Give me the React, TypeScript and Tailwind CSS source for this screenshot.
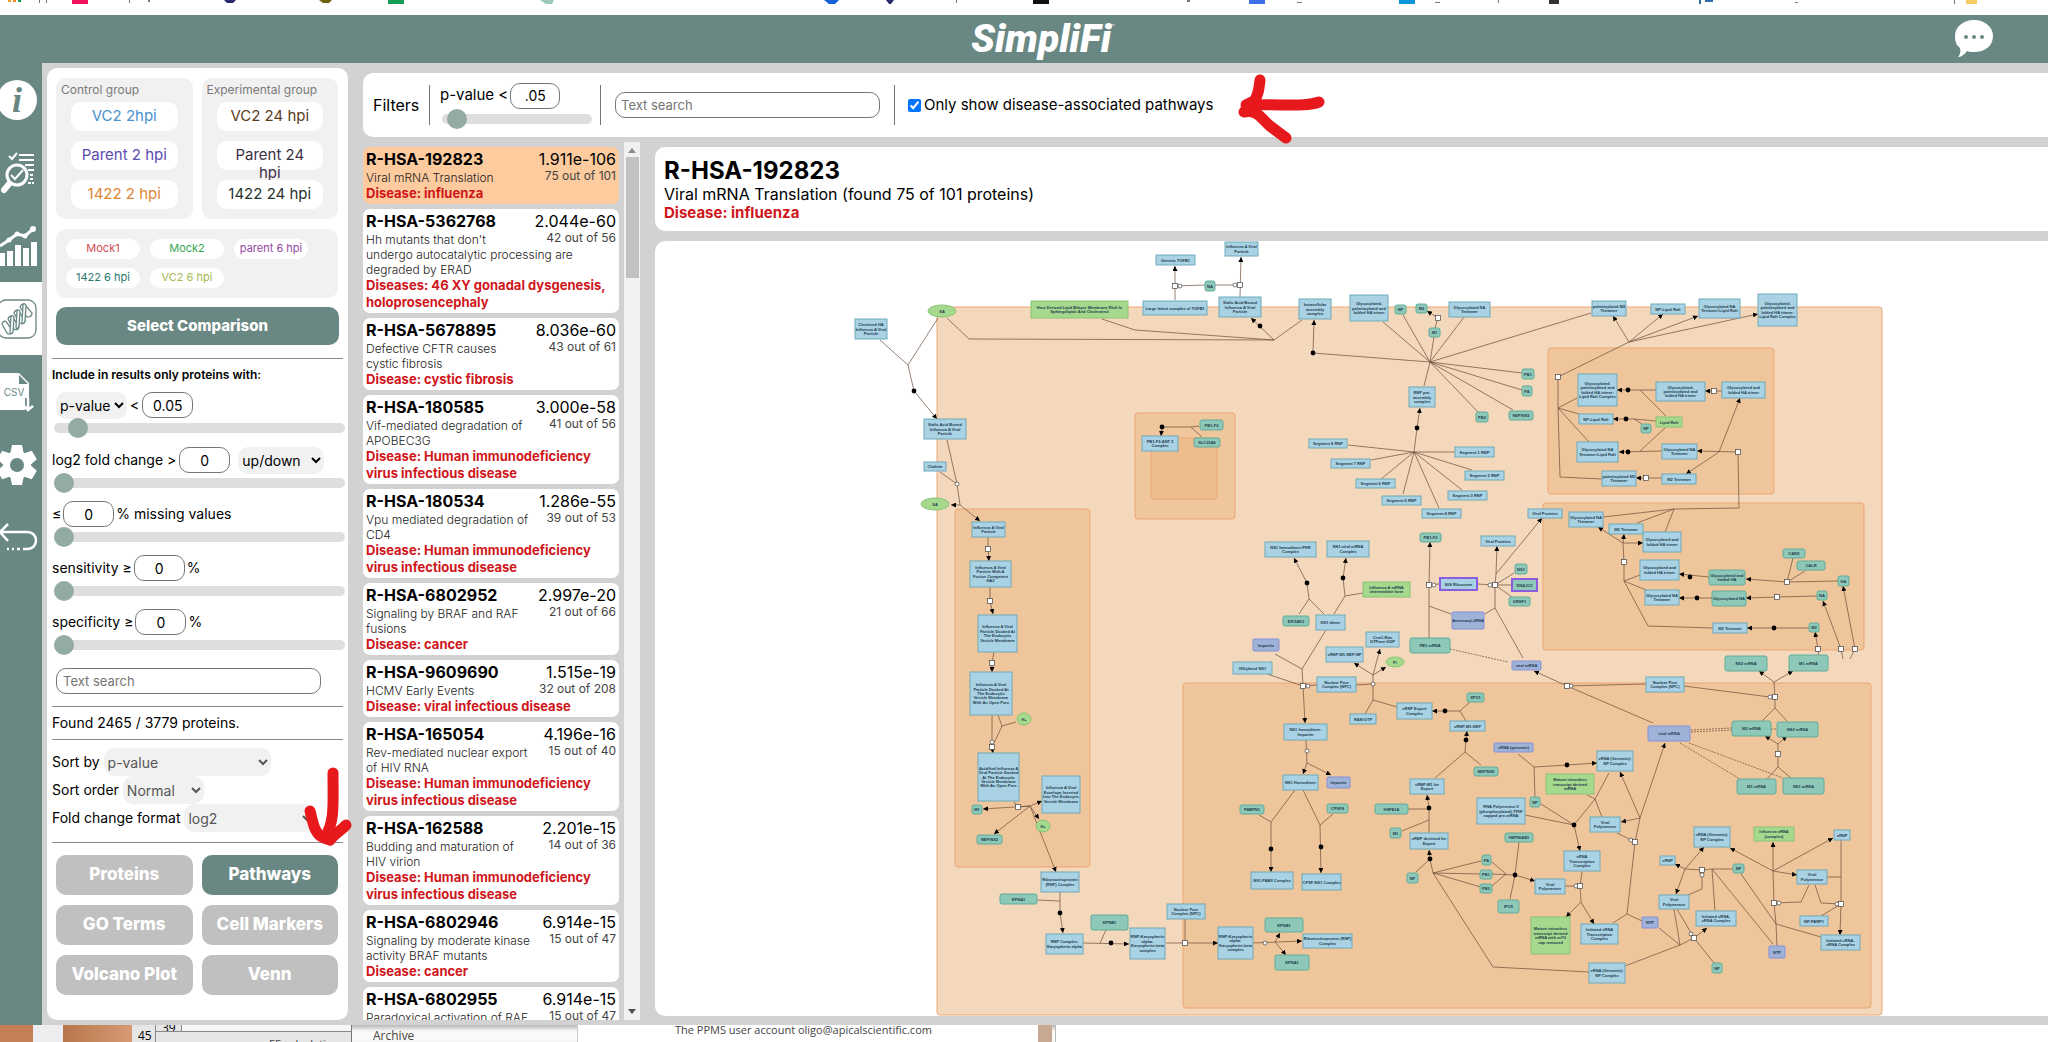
import React from "react";
import clsx from "clsx";

type Pathway = {
  id: string;
  pValue: string;
  count: string;
  name: string;
  disease: string;
};

const pathways: Pathway[] = [
  { id: "R-HSA-192823", pValue: "1.911e-106", count: "75 out of 101", name: "Viral mRNA Translation", disease: "Disease: influenza" },
  { id: "R-HSA-5362768", pValue: "2.044e-60", count: "42 out of 56", name: "Hh mutants that don't\nundergo autocatalytic processing are\ndegraded by ERAD", disease: "Diseases: 46 XY gonadal dysgenesis,\nholoprosencephaly" },
  { id: "R-HSA-5678895", pValue: "8.036e-60", count: "43 out of 61", name: "Defective CFTR causes\ncystic fibrosis", disease: "Disease: cystic fibrosis" },
  { id: "R-HSA-180585", pValue: "3.000e-58", count: "41 out of 56", name: "Vif-mediated degradation of\nAPOBEC3G", disease: "Disease: Human immunodeficiency\nvirus infectious disease" },
  { id: "R-HSA-180534", pValue: "1.286e-55", count: "39 out of 53", name: "Vpu mediated degradation of\nCD4", disease: "Disease: Human immunodeficiency\nvirus infectious disease" },
  { id: "R-HSA-6802952", pValue: "2.997e-20", count: "21 out of 66", name: "Signaling by BRAF and RAF\nfusions", disease: "Disease: cancer" },
  { id: "R-HSA-9609690", pValue: "1.515e-19", count: "32 out of 208", name: "HCMV Early Events", disease: "Disease: viral infectious disease" },
  { id: "R-HSA-165054", pValue: "4.196e-16", count: "15 out of 40", name: "Rev-mediated nuclear export\nof HIV RNA", disease: "Disease: Human immunodeficiency\nvirus infectious disease" },
  { id: "R-HSA-162588", pValue: "2.201e-15", count: "14 out of 36", name: "Budding and maturation of\nHIV virion", disease: "Disease: Human immunodeficiency\nvirus infectious disease" },
  { id: "R-HSA-6802946", pValue: "6.914e-15", count: "15 out of 47", name: "Signaling by moderate kinase\nactivity BRAF mutants", disease: "Disease: cancer" },
  { id: "R-HSA-6802955", pValue: "6.914e-15", count: "15 out of 47", name: "Paradoxical activation of RAF", disease: "Disease: cancer" },
];

const controlGroup = [
  { label: "VC2 2hpi", color: "text-[#4a90cc]" },
  { label: "Parent 2 hpi", color: "text-[#5a4bb0]" },
  { label: "1422 2 hpi", color: "text-[#dd8636]" },
];

const experimentalGroup = [
  { label: "VC2 24 hpi", color: "text-[#5c3c1c]" },
  { label: "Parent 24 hpi", color: "text-[#3d3046]" },
  { label: "1422 24 hpi", color: "text-[#26332b]" },
];

const otherGroup = [
  { label: "Mock1", color: "text-[#d24a55]" },
  { label: "Mock2", color: "text-[#35a853]" },
  { label: "parent 6 hpi", color: "text-[#93489f]" },
  { label: "1422 6 hpi", color: "text-[#27796f]" },
  { label: "VC2 6 hpi", color: "text-[#a3b84e]" },
];

const views = ["Proteins", "Pathways", "GO Terms", "Cell Markers", "Volcano Plot", "Venn"];

/* ---------- pathway diagram ---------- */

type Kind = "complex" | "protein" | "lipid" | "rna" | "hitComplex" | "hitProtein";
type DiagramNode = [number, number, number, number, string];

const compartments = [
  [937, 307, 945, 708, "#f4d8bc"],
  [955, 509, 135, 358, "#efc69c"],
  [1135, 413, 100, 106, "#f0c69c"],
  [1151, 438, 66, 61, "#eebd8d"],
  [1548, 348, 226, 146, "#efc69c"],
  [1543, 503, 321, 147, "#efc69c"],
  [1183, 683, 688, 325, "#efc69c"],
] as const;

const HA = "Glycosylated and|folded HA trimer";
const HA_PALM = "Glycosylated,|palmitoylated and|folded HA trimer";
const HA_RAFT = HA_PALM + ":|Lipid Raft Complex";
const NA = "Glycosylated NA|Tetramer";
const NA_RAFT = "Glycosylated NA|Tetramer:Lipid Raft";
const NPC = "Nuclear Pore|Complex (NPC)";
const DOCKED = "Influenza A Viral|Particle Docked At|The Endocytic|Vesicle Membrane";
const KARYO = "RNP:Karyopherin|alpha:|Karyopherin beta|complex";
const GENOMIC = "vRNA (Genomic):|NP Complex";
const POLY = "Viral|Polymerase";

const complexes: DiagramNode[] = [
  [855, 319, 32, 20, "Clustered HA|Influenza A Viral|Particle"],
  [1156, 255, 39, 10, "Generic TGFB1"],
  [1225, 242, 33, 14, "Influenza A Viral|Particle"],
  [1143, 301, 64, 14, "Large latent complex of TGFB1"],
  [1219, 297, 42, 20, "Sialic Acid Bound|Influenza A Viral|Particle"],
  [1299, 299, 32, 20, "Intracellular|assembly|complex"],
  [924, 419, 42, 20, "Sialic Acid Bound|Influenza A Viral|Particle"],
  [924, 462, 22, 9, "Clathrin"],
  [972, 522, 33, 15, "Influenza A Viral|Particle"],
  [970, 561, 41, 26, "Influenza A Viral|Particle With A|Fusion Competent|HA2"],
  [978, 615, 39, 37, DOCKED],
  [970, 672, 42, 43, DOCKED + "|With An Open Pore"],
  [978, 753, 41, 48, "Acidified Influenza A|Viral Particle Docked|At The Endocytic|Vesicle Membrane|With An Open Pore"],
  [1042, 776, 38, 37, "Influenza A Viral|Envelope Inserted|Into The Endocytic|Vesicle Membrane"],
  [1041, 872, 38, 20, "Ribonucleoprotein|(RNP) Complex"],
  [1046, 934, 37, 20, "RNP Complex:|Karyopherin alpha"],
  [1130, 928, 35, 31, KARYO],
  [1167, 904, 38, 15, NPC],
  [1218, 927, 35, 32, KARYO],
  [1303, 934, 49, 14, "Ribonucleoprotein (RNP)|Complex"],
  [1251, 872, 42, 17, "NS1:PABII Complex"],
  [1302, 874, 39, 16, "CPSF:NS1 Complex"],
  [1283, 775, 35, 15, "NS1 Homodimer"],
  [1284, 724, 43, 16, "NS1 homodimer:|Importin"],
  [1317, 677, 39, 15, NPC],
  [1233, 662, 39, 12, "ISGylated NS1"],
  [1316, 615, 29, 15, "NS1 dimer"],
  [1326, 647, 37, 15, "vRNP:M1:NEP:NP"],
  [1366, 632, 33, 15, "Crm1:Ran|GTPase:GDP"],
  [1350, 714, 26, 10, "RAN:GTP"],
  [1397, 703, 35, 16, "vRNP Export|Complex"],
  [1142, 436, 36, 15, "PB1-F2:ANT 3|Complex"],
  [1265, 542, 51, 15, "NS1 homodimer:PKR|Complex"],
  [1327, 541, 42, 16, "NS1:viral mRNA|Complex"],
  [1350, 295, 38, 26, HA_PALM],
  [1449, 302, 41, 15, NA],
  [1592, 301, 34, 15, "palmitoylated M2|Tetramer"],
  [1651, 304, 34, 10, "NP:Lipid Raft"],
  [1699, 299, 41, 19, NA_RAFT],
  [1758, 294, 39, 32, HA_RAFT],
  [1409, 387, 26, 20, "RNP pre-|assembly|complex"],
  [1309, 439, 38, 9, "Segment 8 RNP"],
  [1331, 459, 39, 9, "Segment 7 RNP"],
  [1356, 479, 39, 9, "Segment 6 RNP"],
  [1382, 496, 39, 9, "Segment 5 RNP"],
  [1422, 509, 39, 9, "Segment 4 RNP"],
  [1448, 491, 39, 9, "Segment 3 RNP"],
  [1465, 471, 39, 9, "Segment 2 RNP"],
  [1455, 447, 39, 10, "Segment 1 RNP"],
  [1528, 509, 34, 9, "Viral Proteins"],
  [1481, 536, 34, 10, "Viral Proteins"],
  [1578, 374, 39, 32, HA_RAFT],
  [1656, 382, 49, 19, HA_PALM],
  [1722, 382, 43, 16, HA],
  [1579, 414, 34, 10, "NP:Lipid Raft"],
  [1577, 442, 41, 20, NA_RAFT],
  [1662, 444, 35, 15, NA],
  [1662, 474, 34, 10, "M2 Tetramer"],
  [1602, 471, 34, 15, "palmitoylated M2|Tetramer"],
  [1569, 512, 34, 15, NA],
  [1609, 524, 34, 10, "M2 Tetramer"],
  [1643, 532, 38, 20, HA],
  [1640, 560, 39, 20, HA],
  [1645, 590, 34, 15, NA],
  [1713, 623, 34, 10, "M2 Tetramer"],
  [1646, 677, 38, 15, NPC],
  [1450, 721, 35, 10, "vRNP:M1:NEP"],
  [1410, 779, 34, 15, "vRNP:M1 for|Export"],
  [1410, 833, 38, 16, "vRNP destined for|Export"],
  [1597, 751, 36, 20, GENOMIC],
  [1477, 798, 48, 26, "RNA Polymerase II|(phosphorylated):TFIIF|capped pre-mRNA"],
  [1590, 817, 30, 15, POLY],
  [1564, 851, 36, 20, "vRNA|Transcription|Complex"],
  [1535, 879, 30, 15, POLY],
  [1581, 924, 37, 20, "Initiated vRNA|Transcription|Complex"],
  [1589, 963, 36, 20, GENOMIC],
  [1694, 827, 36, 20, GENOMIC],
  [1660, 856, 15, 9, "cRNP"],
  [1659, 895, 30, 14, POLY],
  [1696, 911, 40, 15, "Initiated vRNA-|cRNA Complex"],
  [1834, 830, 16, 10, "cRNP"],
  [1797, 870, 30, 14, POLY],
  [1800, 916, 28, 10, "NP:PARP1"],
  [1821, 935, 39, 15, "Initiated cRNA-|vRNA Complex"],
];

const proteins: DiagramNode[] = [
  [1205, 281, 10, 10, "NA"],
  [1200, 420, 23, 10, "PB1-F2"],
  [1194, 438, 26, 9, "SLC25A6"],
  [972, 805, 10, 9, "M1"],
  [977, 835, 25, 9, "NEP/NS2"],
  [1000, 894, 37, 10, "KPNA1"],
  [1091, 915, 37, 15, "KPNB1"],
  [1265, 918, 38, 14, "KPNB1"],
  [1275, 955, 34, 15, "KPNA1"],
  [1240, 805, 24, 9, "PABPN1"],
  [1327, 804, 21, 9, "CPSF4"],
  [1283, 616, 26, 10, "EIF2AK2"],
  [1375, 804, 33, 10, "HSPA1A"],
  [1390, 828, 11, 10, "M1"],
  [1515, 564, 12, 10, "NS1"],
  [1509, 597, 21, 9, "GRSF1"],
  [1420, 533, 21, 9, "PB1-F2"],
  [1410, 638, 40, 15, "PB1 mRNA"],
  [1395, 305, 11, 9, "NP"],
  [1416, 304, 11, 9, "M2"],
  [1429, 328, 11, 9, "M1"],
  [1522, 369, 12, 10, "PB1"],
  [1522, 386, 10, 10, "PA"],
  [1509, 411, 24, 9, "NEP/NS2"],
  [1476, 412, 12, 10, "PB2"],
  [1641, 424, 10, 9, "NP"],
  [1709, 570, 36, 15, "Glycosylated and|folded HA"],
  [1712, 591, 34, 15, "Glycosylated NA"],
  [1783, 549, 22, 9, "CANX"],
  [1797, 561, 28, 9, "CALR"],
  [1838, 576, 11, 10, "HA"],
  [1817, 591, 10, 9, "NA"],
  [1809, 623, 10, 9, "M2"],
  [1725, 656, 42, 15, "NS2 mRNA"],
  [1789, 655, 39, 16, "M1 mRNA"],
  [1732, 721, 39, 15, "M2 mRNA"],
  [1777, 722, 41, 15, "NS2 mRNA"],
  [1737, 779, 39, 15, "M1 mRNA"],
  [1783, 778, 41, 16, "NS1 mRNA"],
  [1467, 693, 17, 9, "XPO1"],
  [1474, 767, 24, 9, "NEP/NS2"],
  [1530, 797, 10, 10, "NP"],
  [1505, 833, 28, 9, "HSP90AB1"],
  [1482, 855, 9, 10, "PA"],
  [1480, 870, 12, 9, "PB1"],
  [1480, 884, 12, 9, "PB2"],
  [1407, 873, 11, 10, "NP"],
  [1498, 900, 21, 13, "IPO5"],
  [1733, 864, 11, 9, "NP"],
  [1712, 963, 10, 10, "NP"],
];

const lipids: DiagramNode[] = [
  [1031, 301, 97, 17, "Host Derived Lipid Bilayer Membrane Rich In|Sphingolipids And Cholesterol"],
  [1363, 582, 47, 15, "Influenza A mRNA|intermediate form"],
  [1656, 417, 26, 10, "Lipid Raft"],
  [1546, 774, 48, 20, "Mature intronless|transcript derived|mRNA"],
  [1531, 917, 39, 37, "Mature intronless|transcript derived|mRNA with m7G|cap removed"],
  [1754, 827, 40, 14, "Influenza vRNA|(complex)"],
];

const rnas: DiagramNode[] = [
  [1253, 639, 26, 12, "Importin"],
  [1327, 777, 23, 11, "Importin"],
  [1452, 612, 32, 17, "Aminoacyl-tRNA"],
  [1512, 661, 29, 9, "viral mRNA"],
  [1494, 743, 39, 9, "vRNA (genomic)"],
  [1648, 726, 42, 15, "viral mRNA"],
  [1642, 917, 16, 11, "NTP"],
  [1769, 946, 16, 12, "NTP"],
];

const ellipses: DiagramNode[] = [
  [942, 311, 14, 6, "SA"],
  [935, 504, 14, 6, "SA"],
  [1024, 719, 7, 6, "H+"],
  [1043, 826, 7, 6, "H+"],
  [1395, 662, 9, 5, "Pi"],
];

// edges that end at a product
const arrows = [
  "880,340 908,365 914,391 937,419", "1274,340 1251,318", "1175,300 1175,266", "1240,297 1241,257",
  "1313,353 1314,320", "1199,426 1191,427 1162,427 1161,436", "947,440 957,484 960,505 980,521", "960,505 951,505",
  "988,537 988,549 989,561", "990,587 990,601 993,614", "994,652 992,663 992,672", "992,715 992,747 993,753",
  "1014,802 1018,807 1030,806 1042,801", "1030,806 983,809", "1030,806 994,834", "1030,806 1039,819", "1030,806 1056,872",
  "1060,892 1060,913 1063,933", "1083,943 1129,944", "1166,943 1218,943", "1253,943 1302,941", "1275,942 1280,933", "1275,942 1286,955",
  "1326,630 1302,669 1303,686 1305,723", "1373,684 1373,675 1380,649", "1373,675 1354,663", "1373,675 1386,667",
  "1306,740 1307,763 1303,774", "1307,763 1331,775", "1295,790 1271,822 1271,872", "1303,790 1320,825 1321,873",
  "1324,614 1309,599 1307,583 1294,558", "1334,614 1345,596 1343,578 1346,558",
  "1435,328 1438,318 1427,311", "1414,452 1417,428 1420,408",
  "1629,342 1613,316", "1629,342 1663,314", "1629,342 1698,316", "1629,342 1758,314",
  "1656,390 1617,390", "1722,391 1705,391", "1656,421 1634,419 1613,419", "1662,451 1619,452",
  "1738,452 1697,451", "1719,452 1740,398", "1719,452 1686,474", "1662,478 1636,478",
  "1623,543 1598,527", "1623,543 1624,534", "1623,543 1643,543", "1709,577 1679,574",
  "1838,581 1787,582 1746,579", "1817,596 1777,597 1746,598", "1712,598 1679,598", "1809,628 1747,628",
  "1819,657 1818,649 1815,632", "1843,659 1841,649 1823,601", "1850,659 1855,649 1843,586",
  "1429,638 1429,585 1430,542", "1495,585 1496,574 1497,546", "1496,574 1542,518",
  "1653,723 1567,686 1534,671", "1774,682 1759,671", "1774,682 1793,671", "1778,744 1765,736", "1778,744 1787,736",
  "1460,711 1432,711", "1435,778 1465,752 1466,740 1467,731", "1429,833 1429,808 1427,795", "1433,873 1430,859 1429,850",
  "1492,874 1515,875 1535,881", "1581,902 1566,917", "1581,902 1594,924", "1574,825 1580,851",
  "1518,754 1534,767 1567,765 1597,763", "1640,818 1620,772", "1640,818 1621,822", "1627,914 1635,842 1640,818 1665,743",
  "1680,945 1694,938 1707,928", "1685,869 1675,864", "1685,869 1704,847", "1685,869 1676,894",
  "1777,946 1776,924 1774,903 1773,871 1773,842", "1773,871 1730,848", "1773,871 1833,838", "1773,871 1797,875",
  "1841,840 1841,904 1840,935",
];

const lines = [
  "938,318 908,365", "947,318 969,339 1274,340", "1102,319 1135,330 1274,340", "1302,320 1274,340",
  "1175,286 1205,285", "1240,285 1215,285", "1313,353 1430,362", "1191,427 1202,437", "940,472 957,484",
  "998,715 1002,726 994,743", "1016,722 1002,726", "1037,900 1060,901", "1106,930 1100,943", "1185,919 1185,943",
  "1275,654 1302,669", "1267,674 1303,686", "1317,685 1303,686", "1356,685 1373,684", "1373,684 1373,700 1365,714", "1373,700 1397,707",
  "1259,815 1271,822", "1333,814 1320,825", "1299,614 1309,599", "1363,593 1345,596",
  "1430,362 1383,322", "1430,362 1403,315", "1430,362 1434,337", "1430,362 1464,317", "1430,362 1591,313",
  "1430,362 1522,373", "1430,362 1522,390", "1430,362 1513,410", "1430,362 1478,412", "1430,362 1424,386",
  "1414,452 1348,445", "1414,452 1371,460", "1414,452 1381,479", "1414,452 1403,494", "1414,452 1439,508",
  "1414,452 1462,490", "1414,452 1472,470", "1414,452 1455,452",
  "1629,342 1558,377 1558,408 1560,477 1602,479", "1558,408 1577,398", "1558,408 1579,414", "1558,408 1589,442",
  "1640,390 1666,416", "1634,419 1642,424", "1640,451 1665,428", "1738,452 1739,508 1674,509 1603,517",
  "1674,509 1637,523", "1674,509 1665,532", "1623,543 1624,562 1624,581 1648,626 1713,628", "1624,581 1640,575", "1624,581 1646,590",
  "1787,582 1793,558", "1787,582 1805,571", "1429,585 1439,584", "1429,606 1451,614", "1477,584 1495,585",
  "1495,585 1514,573", "1495,585 1512,585", "1495,585 1512,597", "1495,585 1495,608 1485,614", "1495,608 1523,658",
  "1567,686 1646,684", "1684,686 1770,697", "1774,682 1775,697 1775,708 1762,721", "1775,708 1787,721",
  "1778,744 1778,767 1767,779", "1778,767 1791,778", "1470,702 1460,711 1466,721", "1481,765 1465,752",
  "1408,809 1429,809", "1402,831 1429,820", "1416,872 1430,859", "1433,873 1481,861", "1433,873 1481,874", "1433,873 1481,887",
  "1433,873 1493,967 1589,972", "1492,862 1506,874 1492,886", "1519,842 1515,875 1510,899", "1565,886 1580,886",
  "1582,872 1580,886 1581,902", "1525,815 1574,825", "1541,804 1574,825", "1609,773 1595,799 1574,825", "1587,795 1595,799 1602,817",
  "1534,767 1535,797", "1617,833 1631,840", "1627,914 1613,923", "1627,914 1642,921", "1659,928 1680,945 1625,966",
  "1674,909 1680,945", "1677,909 1694,938 1714,963", "1685,869 1702,870 1712,869 1733,869", "1688,895 1702,889 1702,870",
  "1712,869 1715,911", "1712,869 1773,944", "1741,874 1776,924 1821,937", "1774,903 1801,902 1809,885",
  "1815,885 1821,903 1841,904", "1827,877 1841,877", "1821,916 1841,904",
];

const dashed = ["1450,649 1508,662", "1691,730 1732,728", "1691,732 1732,730", "1680,743 1740,779", "1689,743 1783,778", "1771,729 1777,729"];

const dots = [
  [914, 391], [1260, 326], [1313, 353], [1162, 427], [1060, 913], [1111, 943], [1271, 849], [1321, 847], [1307, 583],
  [1343, 578], [1417, 428], [1628, 390], [1626, 419], [1628, 452], [1690, 577], [1697, 598], [1774, 628], [1445, 711],
  [1466, 740], [1429, 808], [1430, 859], [1515, 875], [1574, 825], [1567, 765],
];

const circles = [
  [1180, 286], [1235, 285], [957, 484], [992, 742], [1265, 943], [1308, 686], [1373, 684], [1307, 751], [1434, 585],
  [1490, 585], [1571, 686], [1770, 697], [1576, 886], [1631, 840], [1691, 934], [1702, 875], [1779, 903], [1837, 904],
];

const squares = [
  [1175, 286], [1240, 285], [988, 549], [990, 601], [992, 663], [992, 747], [1018, 807], [1185, 943], [1303, 686],
  [1438, 318], [1558, 377], [1714, 391], [1738, 452], [1646, 478], [1624, 562], [1787, 582], [1777, 597], [1818, 649],
  [1841, 649], [1855, 649], [1429, 585], [1495, 585], [1567, 686], [1775, 697], [1778, 754], [1580, 886], [1635, 842],
  [1694, 938], [1702, 870], [1774, 903], [1841, 904],
];

const kindStyle: Record<Kind, { fill: string; stroke: string; rx: number; width: number }> = {
  complex: { fill: "#a9d3e5", stroke: "#6fa9b8", rx: 0, width: 1 },
  protein: { fill: "#8dc8b8", stroke: "#62ac99", rx: 2, width: 1 },
  lipid: { fill: "#a5d98d", stroke: "#8ac474", rx: 0, width: 1 },
  rna: { fill: "#9fb3d8", stroke: "#8590d8", rx: 1, width: 1 },
  hitComplex: { fill: "#a9d3e5", stroke: "#8a5ce0", rx: 0, width: 2 },
  hitProtein: { fill: "#8dc8b8", stroke: "#8a5ce0", rx: 0, width: 2 },
};

function Label({ x, y, text }: { x: number; y: number; text: string }) {
  const rows = text.split("|");
  return (
    <text textAnchor="middle" fontSize="4" fontWeight="700" fill="#1f3b4d">
      {rows.map((row, i) => (
        <tspan key={i} x={x} y={y + 1.5 + (i - (rows.length - 1) / 2) * 4.4}>
          {row}
        </tspan>
      ))}
    </text>
  );
}

function Nodes({ items, kind }: { items: DiagramNode[]; kind: Kind }) {
  const s = kindStyle[kind];
  return (
    <g>
      {items.map(([x, y, w, h, label], i) => (
        <g key={i}>
          <rect x={x} y={y} width={w} height={h} rx={s.rx} fill={s.fill} stroke={s.stroke} strokeWidth={s.width} />
          <Label x={x + w / 2} y={y + h / 2} text={label} />
        </g>
      ))}
    </g>
  );
}

function PathwayDiagram() {
  return (
    <svg viewBox="655 241 1393 775" className="block w-full font-['Liberation_Sans',sans-serif]" role="img" aria-label="Pathway diagram">
      <defs>
        <marker id="head" viewBox="0 0 6 6" refX="6" refY="3" markerWidth="5" markerHeight="5" markerUnits="userSpaceOnUse" orient="auto">
          <path d="M0 0L6 3L0 6z" fill="#000" />
        </marker>
      </defs>
      {compartments.map(([x, y, w, h, fill], i) => (
        <rect key={i} x={x} y={y} width={w} height={h} rx="3" fill={fill} stroke="#eda673" />
      ))}
      <g fill="none" stroke="#6b4c3a" strokeWidth="0.7">
        {lines.map((p, i) => (
          <polyline key={i} points={p} />
        ))}
        {arrows.map((p, i) => (
          <polyline key={i} points={p} markerEnd="url(#head)" />
        ))}
        {dashed.map((p, i) => (
          <polyline key={i} points={p} strokeDasharray="2 1" />
        ))}
      </g>
      <Nodes items={complexes} kind="complex" />
      <Nodes items={proteins} kind="protein" />
      <Nodes items={lipids} kind="lipid" />
      <Nodes items={rnas} kind="rna" />
      <Nodes items={[[1440, 578, 37, 12, "80S Ribosome"]]} kind="hitComplex" />
      <Nodes items={[[1512, 579, 25, 12, "DNAJC3"]]} kind="hitProtein" />
      {ellipses.map(([x, y, rx, ry, label], i) => (
        <g key={i}>
          <ellipse cx={x} cy={y} rx={rx} ry={ry} fill="#a5d98d" stroke="#8ac474" />
          <Label x={x} y={y} text={label} />
        </g>
      ))}
      {dots.map(([x, y], i) => (
        <circle key={i} cx={x} cy={y} r="2.4" />
      ))}
      <g fill="#fff" stroke="#444" strokeWidth="0.7">
        {circles.map(([x, y], i) => (
          <circle key={i} cx={x} cy={y} r="2" />
        ))}
        {squares.map(([x, y], i) => (
          <rect key={i} x={x - 2.5} y={y - 2.5} width="5" height="5" />
        ))}
      </g>
    </svg>
  );
}

/* ---------- small parts ---------- */

const fieldClass = "rounded-[10px] border border-[#767676] bg-white text-center text-sm";
const selectClass = "rounded-[10px] bg-[#f1f1f1] text-sm";

function Slider({ label, value }: { label: string; value: number }) {
  return (
    <input
      type="range"
      aria-label={label}
      defaultValue={value}
      className="block h-[10px] w-full appearance-none rounded-full bg-[#dedede] [&::-webkit-slider-thumb]:size-5 [&::-webkit-slider-thumb]:appearance-none [&::-webkit-slider-thumb]:rounded-full [&::-webkit-slider-thumb]:bg-[#94aaa5]"
    />
  );
}

function GroupCard({ title, items }: { title: string; items: { label: string; color: string }[] }) {
  return (
    <div className="flex-1 rounded-[10px] bg-[#f1f1f1] px-[15px] pb-[10px]">
      <h2 className="-mx-[10px] h-6 pt-1 text-xs leading-4 whitespace-nowrap text-[#7a7a7a]">{title}</h2>
      <div className="flex flex-col gap-[10px]">
        {items.map((item) => (
          <div key={item.label} className={clsx("h-[29px] rounded-[10px] bg-white px-2 pt-[5px] text-center text-[15px] leading-[18px]", item.color)}>
            {item.label}
          </div>
        ))}
      </div>
    </div>
  );
}

function ProteinFilters() {
  return (
    <div className="flex flex-col text-sm">
      <div className="flex h-7 items-center gap-[3px] pl-1">
        <select aria-label="Statistic" className={clsx(selectClass, "h-[27px] w-[71px]")}>
          <option>p-value</option>
        </select>
        <label htmlFor="pv">&lt;</label>
        <input id="pv" defaultValue="0.05" className={clsx(fieldClass, "h-[26px] w-[51px]")} />
      </div>
      <div className="mt-1 -mr-0.5 ml-0.5">
        <Slider label="p-value" value={5} />
      </div>

      <div className="mt-[13px] flex h-7 items-center gap-[3px]">
        <label htmlFor="fc">log2 fold change &gt;</label>
        <input id="fc" defaultValue="0" className={clsx(fieldClass, "h-[26px] w-[51px]")} />
        <select aria-label="Direction" className={clsx(selectClass, "ml-[5px] h-[27px] w-[86px]")}>
          <option>up/down</option>
        </select>
      </div>
      <div className="mt-1 -mr-0.5 ml-0.5">
        <Slider label="log2 fold change" value={0} />
      </div>

      <div className="mt-3 flex h-7 items-center gap-[2px]">
        <label htmlFor="mv">≤</label>
        <input id="mv" defaultValue="0" className={clsx(fieldClass, "h-[26px] w-[51px]")} />
        <span>% missing values</span>
      </div>
      <div className="mt-1 -mr-0.5 ml-0.5">
        <Slider label="missing values" value={0} />
      </div>

      {["sensitivity", "specificity"].map((name) => (
        <React.Fragment key={name}>
          <div className="mt-3 flex h-7 items-center gap-[2px]">
            <label htmlFor={name}>{name} ≥</label>
            <input id={name} defaultValue="0" className={clsx(fieldClass, "h-[26px] w-[51px]")} />
            <span>%</span>
          </div>
          <div className="mt-1 -mr-0.5 ml-0.5">
            <Slider label={name} value={0} />
          </div>
        </React.Fragment>
      ))}
    </div>
  );
}

function LeftPanel() {
  return (
    <section className="w-[301px] shrink-0 rounded-[10px] bg-white px-[5px] pt-[10px]">
      <div className="px-1">
        <div className="flex h-[141px] gap-[9px] pr-px">
          <GroupCard title="Control group" items={controlGroup} />
          <GroupCard title="Experimental group" items={experimentalGroup} />
        </div>
        <div className="mt-[10px] mr-px grid grid-cols-[74px_74px_74px] gap-x-[10px] gap-y-[9px] rounded-[10px] bg-[#f1f1f1] p-[10px]">
          {otherGroup.map((item) => (
            <div key={item.label} className={clsx("h-5 rounded-[10px] bg-white text-center text-[11px] leading-[18px]", item.color)}>
              {item.label}
            </div>
          ))}
        </div>
        <button className="mt-[9px] block h-[38px] w-full rounded-[10px] bg-[#698883] text-[15px] font-extrabold text-white">Select Comparison</button>
      </div>

      <hr className="mt-[13px] border-[#8a8a8a]" />
      <h3 className="mt-[7px] mb-[7px] text-xs leading-[18px] font-semibold">Include in results only proteins with:</h3>
      <ProteinFilters />

      <input type="text" aria-label="Text search" placeholder="Text search" className="mt-[18px] ml-1 block h-[26px] w-[265px] rounded-[10px] border border-[#767676] px-[6px] text-[13px] placeholder:text-[#757575]" />

      <hr className="mt-3 border-[#8a8a8a]" />
      <p className="py-[6px] text-sm leading-5">Found 2465 / 3779 proteins.</p>
      <hr className="border-[#8a8a8a]" />

      <div className="mt-2 flex flex-col text-sm">
        <div className="flex h-7 items-center gap-1">
          <label htmlFor="sort">Sort by</label>
          <select id="sort" className={clsx(selectClass, "h-7 w-[167px] text-[#555]")}>
            <option>p-value</option>
          </select>
        </div>
        <div className="flex h-7 items-center gap-1">
          <label htmlFor="order">Sort order</label>
          <select id="order" className={clsx(selectClass, "h-7 w-[81px] text-[#555]")}>
            <option>Normal</option>
          </select>
        </div>
        <div className="flex h-7 items-center gap-1">
          <label htmlFor="format">Fold change format</label>
          <select id="format" className={clsx(selectClass, "h-7 w-[131px] text-[#555]")}>
            <option>log2</option>
          </select>
        </div>
      </div>

      <hr className="mt-[10px] border-[#8a8a8a]" />
      <div className="mt-3 grid grid-cols-2 gap-x-[9px] gap-y-[10px] pr-[5px] pl-1">
        {views.map((view) => (
          <button key={view} className={clsx("h-10 rounded-[10px] text-[17px] font-extrabold whitespace-nowrap text-white", view === "Pathways" ? "bg-[#698883]" : "bg-[#c0c0c0]")}>
            {view}
          </button>
        ))}
      </div>
    </section>
  );
}

function PathwayCard({ item, active }: { item: Pathway; active: boolean }) {
  return (
    <article className={clsx("shrink-0 rounded-[7px] px-[3px] py-[2px]", active ? "bg-[#fdcb9e]" : "bg-white")}>
      <div className="float-right text-right">
        <p className="text-base leading-5">{item.pValue}</p>
        <p className="text-xs leading-[14px] text-[#444]">{item.count}</p>
      </div>
      <h3 className="mb-px text-base leading-5 font-bold">{item.id}</h3>
      <p className="text-xs leading-[15px] font-light whitespace-pre-line text-[#222]">{item.name}</p>
      <p className="text-[13px] leading-[17px] font-bold whitespace-pre-line text-[#d0161b]">{item.disease}</p>
    </article>
  );
}

function SideNav() {
  const cell = "flex h-[73px] w-full items-center";
  return (
    <nav className="w-[42px] shrink-0 bg-[#698883]">
      <button aria-label="Info" className={cell}>
        <svg viewBox="0 0 42 73" className="w-full">
          <circle cx="17" cy="37" r="20" fill="#fff" />
          <text x="17" y="49" textAnchor="middle" fontSize="36" fontWeight="700" fontStyle="italic" fontFamily="Liberation Serif, serif" fill="#698883">i</text>
        </svg>
      </button>
      <button aria-label="Quality" className={cell}>
        <svg viewBox="0 0 42 73" className="w-full" fill="none" stroke="#fff" strokeWidth="2">
          <path d="M9 20l3 3l5-6M19 19h15M19 24h15M25 29h9M28 34h6" />
          <path d="M30 39h4M30 43h4M28 47h6" strokeDasharray="3 1" />
          <circle cx="17" cy="39" r="10" strokeWidth="3" />
          <path d="M11 39l4 4l8-9" />
          <path d="M9 48l-5 6" strokeWidth="6" strokeLinecap="round" />
        </svg>
      </button>
      <button aria-label="Charts" className={cell}>
        <svg viewBox="0 0 42 73" className="w-full" fill="#fff">
          <path d="M0 44h5v13h-5zM7 42h6v15h-6zM15 36h6v21h-6zM23 39h6v18h-6zM31 33h6v24h-6z" />
          <path d="M0 37L9 31L17 25L25 27L33 20" fill="none" stroke="#fff" strokeWidth="3" />
          <circle cx="9" cy="31" r="2.5" />
          <circle cx="17" cy="25" r="2.5" />
          <circle cx="25" cy="27" r="2.5" />
          <circle cx="33" cy="20" r="3" />
        </svg>
      </button>
      <button aria-label="Results" className={clsx(cell, "bg-white")}>
        <svg viewBox="0 0 42 73" className="w-full" fill="none" stroke="#698883" strokeWidth="1.3">
          <rect x="-2" y="18" width="38" height="38" rx="8" />
          <g fill="#fff">
            <path d="M2 42C3 39 6 38 7 41L13 49C13 52 9 53 7 51Z" />
            <path d="M8 37C9 34 12 33 13 36L19 44C19 48 15 49 13 46Z" />
            <path d="M14 31C15 28 18 27 19 30L25 38C25 42 21 43 19 40Z" />
            <path d="M20 25C21 22 24 21 25 23L32 31C32 35 28 36 26 34Z" />
            <path d="M10 50L11 34C12 33 14 34 14 36L13 50C12 52 10 52 10 50Z" />
            <path d="M16 45L17 29C18 27 20 28 20 30L19 44C18 47 16 47 16 45Z" />
            <path d="M22 40L23 23C24 21 26 22 26 24L25 39C24 42 22 42 22 40Z" />
          </g>
        </svg>
      </button>
      <button aria-label="Download CSV" className={cell}>
        <svg viewBox="0 0 42 73" className="w-full">
          <path d="M0 18H19L29 28V43H25V55H0Z" fill="#fff" />
          <path d="M19 20V29H28Z" fill="#698883" />
          <text x="14" y="41" textAnchor="middle" fontSize="10" fontFamily="Inter, sans-serif" fill="#698883">CSV</text>
          <path d="M28 43V54M24 51L28 55L33 51" fill="none" stroke="#fff" strokeWidth="2.5" />
        </svg>
      </button>
      <button aria-label="Settings" className={cell}>
        <svg viewBox="0 0 42 73" className="w-full">
          <g fill="#fff" transform="translate(17 37)">
            <circle r="14" />
            <path d="M-5-20H5L7-10H-7ZM-5 20H5L7 10H-7Z" />
            <path d="M-5-20H5L7-10H-7ZM-5 20H5L7 10H-7Z" transform="rotate(60)" />
            <path d="M-5-20H5L7-10H-7ZM-5 20H5L7 10H-7Z" transform="rotate(120)" />
            <circle r="7" fill="#698883" />
          </g>
        </svg>
      </button>
      <button aria-label="Back" className={cell}>
        <svg viewBox="0 0 42 73" className="w-full" fill="none" stroke="#fff" strokeWidth="2.5">
          <path d="M8 23L0 31L8 40M0 31H27C39 31 39 48 27 48H23M20 48H17M14 48H12M9 48H7" />
        </svg>
      </button>
    </nav>
  );
}

function FilterBar() {
  return (
    <section className="flex h-16 shrink-0 items-center rounded-l-[10px] bg-white pl-[10px] text-base">
      <span className="w-14">Filters</span>
      <div className="h-10 w-px bg-[#777]" />
      <div className="ml-[10px] w-[152px]">
        <div className="flex items-center gap-[2px]">
          <label htmlFor="limit" className="text-[15px]">p-value &lt;</label>
          <input id="limit" defaultValue=".05" className={clsx(fieldClass, "h-[26px] w-[50px]")} />
        </div>
        <div className="mt-[5px] mb-1 ml-[2px]">
          <Slider label="p-value limit" value={4} />
        </div>
      </div>
      <div className="ml-2 h-10 w-px bg-[#777]" />
      <input type="text" aria-label="Search pathways" placeholder="Text search" className="mx-[14px] h-[26px] w-[265px] rounded-[10px] border border-[#767676] px-[5px] text-[13px] placeholder:text-[#757575]" />
      <div className="h-10 w-px bg-[#777]" />
      <input id="disease" type="checkbox" defaultChecked className="ml-[13px] size-[13px]" />
      <label htmlFor="disease" className="ml-[3px] text-[15px]">Only show disease-associated pathways</label>
    </section>
  );
}

function DesktopStrip() {
  return (
    <footer className="flex h-[17px] shrink-0 overflow-hidden bg-[#fbfaf9] font-['Open_Sans',sans-serif] text-xs leading-[21px] text-[#444] shadow-[inset_0_3px_4px_#b5b5b5]">
      <div className="w-[33px] bg-[#c57f56]" />
      <div className="w-[30px] bg-[#ededf0]" />
      <div className="w-[69px] bg-linear-to-r from-[#b8764c] to-[#d69b74]" />
      <div className="flex w-[220px] border-r border-[#777] bg-[#e6e6e6]">
        <span className="w-6 border-r border-[#888] pl-[6px] text-black">45</span>
        <div className="flex-1">
          <div className="flex h-[7px] overflow-hidden border-b border-[#888] leading-[6px]">
            <span className="w-[26px] border-r border-[#888] pl-[6px] text-black">39</span>
            <span className="flex-1 bg-[#f6f6f6]" />
          </div>
          <p className="pl-[113px] text-[11px] leading-6 whitespace-nowrap">EE calculation</p>
        </div>
      </div>
      <span className="w-[226px] border-r border-[#ccc] pl-[21px]">Archive</span>
      <span className="w-[460px] bg-white pl-[97px] text-[11px] leading-[10px] whitespace-nowrap">The PPMS user account oligo@apicalscientific.com</span>
      <div className="mr-[3px] w-[14px] bg-[#c9a892]" />
      <div className="flex-1 border-l border-[#bbb] bg-white" />
    </footer>
  );
}

function BookmarkStrip() {
  return (
    <div className="h-[15px] shrink-0 bg-white">
      <svg viewBox="0 0 2048 4" className="block h-1 w-full" preserveAspectRatio="none">
        <path d="M8 0h3v2h-3z" fill="#e8a020" />
        <path d="M13 0h3v2h-3z" fill="#f08a24" />
        <path d="M18 0h3v2h-3zM388 0h16v4h-16z" fill="#129c54" />
        <path d="M72 0h16v4h-16z" fill="#f0125f" />
        <path d="M224 0h12l-3 3h-6zM886 0h8l-3 4h-2z" fill="#2b2b6b" />
        <path d="M319 0h13l-3 3h-6z" fill="#6a6410" />
        <path d="M540 0h14l-2 4h-6z" fill="#9cc9bb" />
        <path d="M824 0h15l-4 4h-6z" fill="#1460d8" />
        <path d="M1033 0h16v4h-16z" fill="#111" />
        <path d="M1249 0h16v4h-16z" fill="#3f6fe4" />
        <path d="M1399 0h16v4h-16z" fill="#0a95d8" />
        <path d="M1549 0h10v4h-10z" fill="#333" />
        <path d="M1699 0h2v4h-2zM1705 0h8v2h-8z" fill="#2f6ea8" />
        <path d="M1966 0h11v4h-11z" fill="#f5ce62" />
        <path d="M39 0h1v3h-1zM46 0h1v3h-1zM129 0h1v3h-1zM148 0h2v2h-2zM956 0h1v3h-1zM1187 0h3v2h-3zM1297 2h5v1h-5zM1435 2h5v1h-5zM1498 0h1v3h-1zM1795 2h3v1h-3zM1954 0h1v4h-1z" fill="#777" />
      </svg>
    </div>
  );
}

export default function App() {
  return (
    <div className="relative flex h-screen flex-col overflow-hidden bg-[#d2d2d2] font-['Inter','Liberation_Sans',sans-serif] text-black">
      <BookmarkStrip />
      <header className="flex h-12 shrink-0 items-center bg-[#698883] pr-[54px]">
        <div className="flex flex-1 items-start justify-center pl-[132px] text-white">
          <h1 className="font-['Roboto',sans-serif] text-[39px] leading-9 font-black italic">SimpliFi</h1>
          <span className="text-[6px] leading-3">™</span>
        </div>
        <button aria-label="Chat">
          <svg viewBox="0 0 40 38" className="h-[38px] w-10">
            <path d="M20 0C31 0 39 7 39 16C39 26 31 32 20 32C17 32 15 32 13 31C10 35 7 37 4 37C6 35 7 31 6 28C2 25 1 21 1 16C1 7 9 0 20 0Z" fill="#fff" />
            <circle cx="12" cy="17" r="2" fill="#698883" />
            <circle cx="20" cy="17" r="2" fill="#698883" />
            <circle cx="28" cy="17" r="2" fill="#698883" />
          </svg>
        </button>
      </header>

      <div className="flex min-h-0 flex-1">
        <SideNav />
        <main className="flex min-w-0 flex-1 gap-[15px] py-[5px] pl-[5px]">
          <LeftPanel />
          <div className="flex min-w-0 flex-1 flex-col pt-[5px]">
            <FilterBar />
            <div className="mt-[5px] flex min-h-0 flex-1">
              <div className="flex w-64 shrink-0 flex-col gap-[5px] overflow-hidden pt-[5px]">
                {pathways.map((item, idx) => (
                  <PathwayCard key={item.id} item={item} active={idx === 0} />
                ))}
              </div>
              <div className="ml-[5px] flex w-4 shrink-0 flex-col items-center justify-between bg-[#f1f1f1] py-[6px]">
                <div className="flex flex-col items-center gap-1">
                  <svg viewBox="0 0 8 5" className="h-[5px] w-2" fill="#8a8a8a"><path d="M4 0L8 5H0Z" /></svg>
                  <div className="h-[121px] w-[13px] bg-[#c1c1c1]" />
                </div>
                <svg viewBox="0 0 8 5" className="h-[5px] w-2" fill="#505050"><path d="M0 0H8L4 5Z" /></svg>
              </div>
              <div className="ml-[15px] flex min-w-0 flex-1 flex-col gap-[10px] pt-[5px] pb-1">
                <section className="h-[84px] shrink-0 rounded-l-[10px] bg-white px-[9px] pt-[10px]">
                  <h2 className="text-2xl leading-[27px] font-bold">R-HSA-192823</h2>
                  <p className="text-base leading-5">Viral mRNA Translation (found 75 of 101 proteins)</p>
                  <p className="text-[15px] leading-[17px] font-bold text-[#d0161b]">Disease: influenza</p>
                </section>
                <section className="min-h-0 flex-1 overflow-hidden rounded-l-[10px] bg-white">
                  <PathwayDiagram />
                </section>
              </div>
            </div>
          </div>
        </main>
      </div>
      <DesktopStrip />

      {/* hand-drawn pointers */}
      <svg viewBox="0 0 90 80" className="pointer-events-none absolute top-[68px] left-[1236px] h-20 w-[90px]" fill="none" stroke="#e8191c" strokeWidth="11" strokeLinecap="round" strokeLinejoin="round">
        <path d="M24 12C23 22 22 28 18 33L10 37" />
        <path d="M83 34C70 39 50 36 12 37" />
        <path d="M8 44C22 41 26 52 34 58L50 70" />
      </svg>
      <svg viewBox="0 0 60 90" className="pointer-events-none absolute top-[764px] left-[300px] h-[90px] w-[60px]" fill="none" stroke="#e8191c" strokeWidth="11" strokeLinecap="round" strokeLinejoin="round">
        <path d="M33 9C33 40 35 58 25 73" />
        <path d="M10 47C13 58 14 70 24 74L30 76" />
        <path d="M46 61C42 66 34 70 30 76" />
      </svg>
    </div>
  );
}
